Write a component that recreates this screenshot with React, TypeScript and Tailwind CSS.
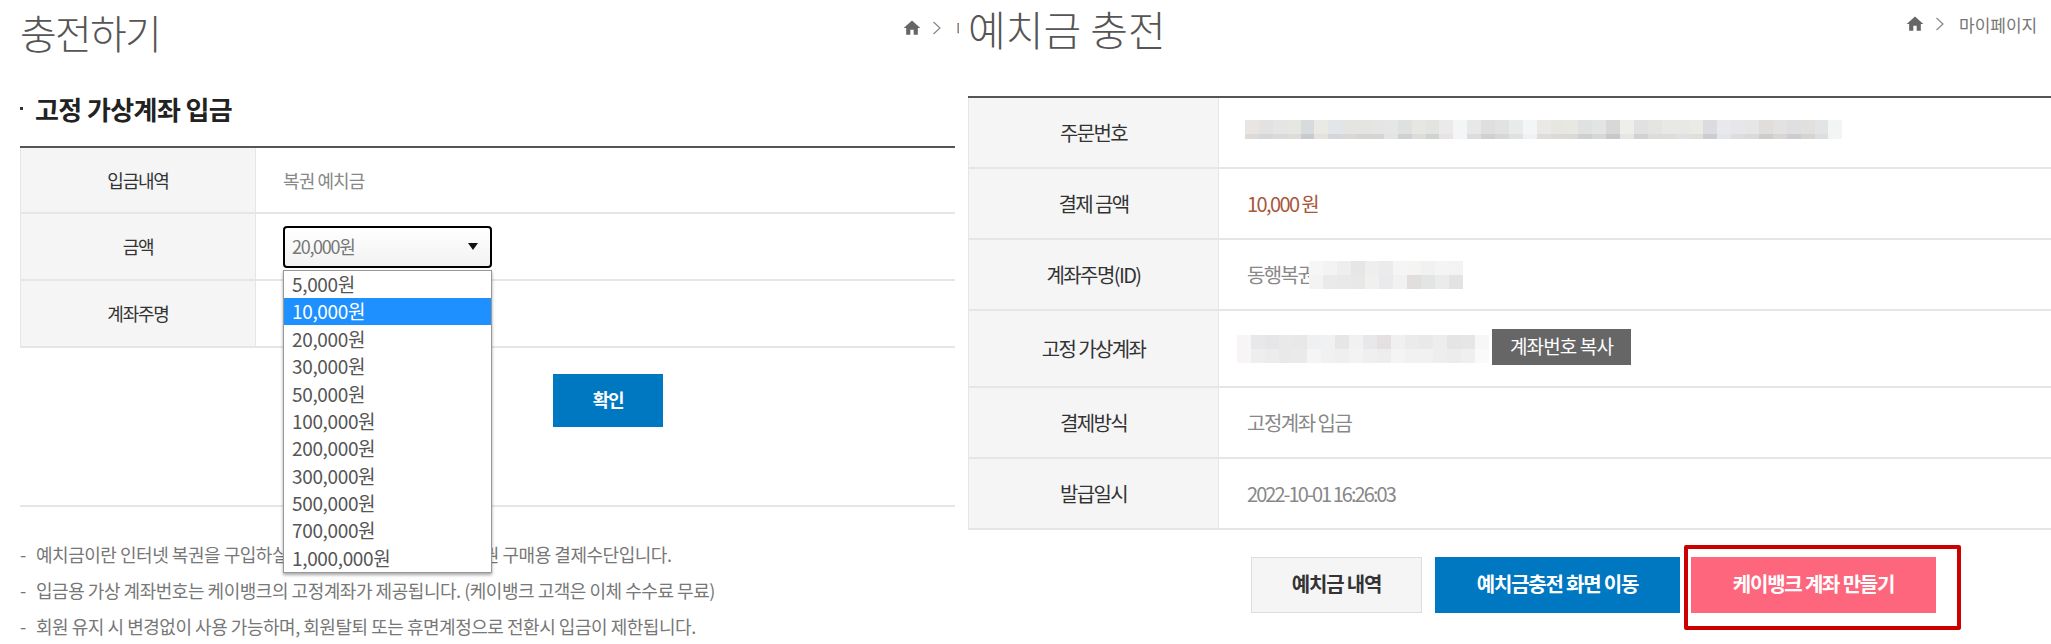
import React from "react";
import { MdHome } from "react-icons/md";

const FONT = "font-['Noto_Sans_CJK_KR','Noto_Sans',sans-serif]";

function Crumb({ clip }: { clip?: boolean }) {
  return (
    <div className={`flex items-center text-[#777] ${clip ? "w-[57px] overflow-hidden" : "w-[132px]"}`}>
      <MdHome className="w-[20px] h-[20px] shrink-0 text-[#666]" />
      <svg className="ml-[10px] shrink-0" width="10" height="14" viewBox="0 0 10 14" fill="none">
        <path d="M1.5 1 L8 7 L1.5 13" stroke="#888" strokeWidth="1.2" />
      </svg>
      <span className="ml-[14px] shrink-0 text-[17px] whitespace-nowrap leading-none">마이페이지</span>
    </div>
  );
}

function Row({ label, h, children, w, t }: { label: string; h: string; children?: React.ReactNode; w: string; t: string }) {
  return (
    <div className={`flex border-b-2 border-[#e6e6e6] ${h}`}>
      <div className={`${w} ${t} shrink-0 bg-[#f5f5f5] border-x border-[#e6e6e6] flex items-center justify-center text-[#333]`}>
        {label}
      </div>
      <div className="flex-1 flex items-center min-w-0">{children}</div>
    </div>
  );
}

const options = ["5,000원", "10,000원", "20,000원", "30,000원", "50,000원", "100,000원", "200,000원", "300,000원", "500,000원", "700,000원", "1,000,000원"];

function Mosaic({ rows, cell, w, x }: { rows: { h: string; c: string[] }[]; cell: string; w: string; x?: string }) {
  return (
    <div className={`flex flex-col shrink-0 blur-[0.6px] ${w} ${x ?? ""}`}>
      {rows.map((r, i) => (
        <div key={i} className={`flex ${r.h}`}>
          {r.c.map((c, j) => (
            <div key={j} className={`${cell} shrink-0 ${c}`} />
          ))}
        </div>
      ))}
    </div>
  );
}

const p1a = ["bg-[#e8e5e2]","bg-[#e2e2e2]","bg-[#e4e6e6]","bg-[#e6e6e2]","bg-[#d8dbde]","bg-[#ebe9e4]","bg-[#e2e6ea]","bg-[#e6e3e3]","bg-[#e4e4e2]","bg-[#e5e6e4]","bg-[#e5e7e7]","bg-[#dfe1e0]","bg-[#e6e7e3]","bg-[#e2e4e2]","bg-[#ebe9e9]","bg-[#f4f5f7]","bg-[#e7e8e8]","bg-[#dfdfdf]","bg-[#e1e2e4]","bg-[#e9eaea]","bg-[#f4f5f6]","bg-[#ebe8e8]","bg-[#e8e6e1]","bg-[#e8e8e3]","bg-[#dfe2e0]","bg-[#e2e4e5]","bg-[#d8d8d8]","bg-[#eeeeeb]","bg-[#e1e1e1]","bg-[#e4e4e3]","bg-[#e8e8e7]","bg-[#e8e8e6]","bg-[#ebebe6]","bg-[#dcdce0]","bg-[#e8e9ec]","bg-[#e8e6e8]","bg-[#e6e6e6]","bg-[#e0dddd]","bg-[#e4e1e1]","bg-[#dfdee0]","bg-[#e2dfdf]","bg-[#e2e4e6]","bg-[#f3f4f4]"];
const p1b = ["bg-[#dedbd7]","bg-[#d7d7d7]","bg-[#d9dbdb]","bg-[#dcdcd8]","bg-[#c8cbce]","bg-[#e4e2dd]","bg-[#d3d7da]","bg-[#dad7d7]","bg-[#d4d4d2]","bg-[#d5d6d4]","bg-[#e3e5e5]","bg-[#cfd1d0]","bg-[#dcddd9]","bg-[#d0d2d0]","bg-[#e6e4e4]","bg-[#f4f5f7]","bg-[#dcdddd]","bg-[#d0d0d0]","bg-[#d6d7d9]","bg-[#e0e1e1]","bg-[#f0f1f2]","bg-[#dfdcdc]","bg-[#dcdad5]","bg-[#dadad5]","bg-[#cdd0ce]","bg-[#d5d7d8]","bg-[#c8c8c8]","bg-[#e6e6e3]","bg-[#d2d2d2]","bg-[#dcdcdb]","bg-[#dddddc]","bg-[#e1e1df]","bg-[#e0e0db]","bg-[#cdcdd1]","bg-[#e4e5e8]","bg-[#dedcde]","bg-[#dadada]","bg-[#cfcccc]","bg-[#d8d5d5]","bg-[#cdccce]","bg-[#d6d3d3]","bg-[#dcdee0]","bg-[#f3f4f4]"];
const p2a = ["bg-[#f6f6f6]","bg-[#f3f3f3]","bg-[#eeeeee]","bg-[#e6e6e6]","bg-[#eeeeef]","bg-[#ebebeb]","bg-[#f5f5f5]","bg-[#f4f4f3]","bg-[#f1f1f1]","bg-[#f6f4f2]","bg-[#f3f3f3]"];
const p2b = ["bg-[#f3f3f3]","bg-[#ebe9e9]","bg-[#e9e9ea]","bg-[#e8e8e8]","bg-[#f0f0ee]","bg-[#eaeaec]","bg-[#f1f1f2]","bg-[#e2dede]","bg-[#e3e4e4]","bg-[#ebebeb]","bg-[#e4e3e3]"];
const p3a = ["bg-[#f7f5f5]","bg-[#e8e8ea]","bg-[#e6e6e8]","bg-[#e9e9e9]","bg-[#e9e8e8]","bg-[#eef0f2]","bg-[#f1f1f1]","bg-[#e6e6e6]","bg-[#f1f1f1]","bg-[#e8e8ea]","bg-[#e4e0e2]","bg-[#f0f0f0]","bg-[#ebebeb]","bg-[#e9e9e9]","bg-[#ededed]","bg-[#e5e5e6]","bg-[#e6e6e6]","bg-[#f7f7f7]"];
const p3b = ["bg-[#f7f5f5]","bg-[#eeeeee]","bg-[#ececec]","bg-[#e9e9e9]","bg-[#eaeaea]","bg-[#f5f5f5]","bg-[#f0f1f2]","bg-[#efefef]","bg-[#f3f3f3]","bg-[#efeff0]","bg-[#ededed]","bg-[#f4f4f4]","bg-[#f1f1f1]","bg-[#f1f1f1]","bg-[#eeeeee]","bg-[#ececec]","bg-[#efefef]","bg-[#fafafa]"];

function Btn({ cls, children }: { cls: string; children: React.ReactNode }) {
  return <div className={`h-[56px] flex items-center justify-center font-bold pb-[3px] ${cls}`}>{children}</div>;
}

const LT = "text-[18px] tracking-[-1.2px]";
const RT = "text-[20px] tracking-[-1.6px]";

export default function App() {
  return (
    <div className={`${FONT} flex w-[2051px] h-[644px] overflow-hidden bg-white`}>
      {/* left */}
      <div className="w-[968px] shrink-0 pl-[20px] pr-[13px]">
        <div className="h-[68px] flex items-start justify-between">
          <h1 className="text-[40px] leading-[48px] mt-[8px] font-light tracking-[-1.8px] text-[#555]">충전하기</h1>
          <div className="mt-[18px] -mr-[4px]"><Crumb clip /></div>
        </div>
        <div className="h-[78px] flex items-center pt-[3px]">
          <span className="w-[3px] h-[3px] bg-[#333] mr-[12px]" />
          <h2 className="text-[26px] font-bold tracking-[-0.6px] text-[#222]">고정 가상계좌 입금</h2>
        </div>
        <div className="border-t-2 border-[#555]">
          <Row label="입금내역" h="h-[66px]" w="w-[236px]" t={LT}>
            <span className="ml-[27px] text-[18px] tracking-[-0.9px] text-[#888]">복권 예치금</span>
          </Row>
          <Row label="금액" h="h-[67px]" w="w-[236px]" t={LT}>
            <div className="relative ml-[27px] w-[209px]">
              <div className="h-[42px] border-2 border-black rounded-[4px] bg-gradient-to-b from-white to-[#f2f2f2] flex items-center justify-between pl-[7px] pr-[11px] text-[#777] text-[18px] tracking-[-1.3px]">
                <span>20,000원</span>
                <svg width="12" height="9" viewBox="0 0 12 9"><path d="M1 1 H11 L6 8 Z" fill="#111" /></svg>
              </div>
              <div className="absolute z-10 left-0 top-[44px] w-[209px] bg-white border border-[#999] shadow-[0_2px_3px_rgba(0,0,0,0.35)]">
                {options.map((o) => (
                  <div key={o} className={`h-[27.4px] flex items-center pl-[8px] text-[19px] tracking-[-0.35px] ${o === "10,000원" ? "bg-[#1e90ff] text-white" : "text-[#555]"}`}>{o}</div>
                ))}
              </div>
            </div>
          </Row>
          <Row label="계좌주명" h="h-[67px]" w="w-[236px]" t={LT} />
        </div>
        <div className="pt-[26px] flex pl-[533px]">
          <Btn cls="w-[110px] !h-[53px] bg-[#0078c1] text-white text-[18px] tracking-[-1.2px]">확인</Btn>
        </div>
        <div className="mt-[78px] border-t-2 border-[#e6e6e6] pt-[35px] text-[18px] tracking-[-0.47px] text-[#777] flex flex-col gap-[11px] leading-[25px]">
          <p className="flex whitespace-nowrap"><span className="w-[16px]">-</span>예치금이란 인터넷 복권을 구입하실 때 사용하실 수 있는 동행복권 구매용 결제수단입니다.</p>
          <p className="flex whitespace-nowrap"><span className="w-[16px]">-</span>입금용 가상 계좌번호는 케이뱅크의 고정계좌가 제공됩니다. (케이뱅크 고객은 이체 수수료 무료)</p>
          <p className="flex whitespace-nowrap"><span className="w-[16px]">-</span>회원 유지 시 변경없이 사용 가능하며, 회원탈퇴 또는 휴면계정으로 전환시 입금이 제한됩니다.</p>
        </div>
      </div>

      {/* right */}
      <div className="flex-1 min-w-0">
        <div className="h-[96px] flex items-start justify-between pr-[14px]">
          <h1 className="text-[41px] leading-[48px] mt-[4px] font-light text-[#555]">예치금 충전</h1>
          <div className="mt-[14px]"><Crumb /></div>
        </div>
        <div className="border-t-2 border-[#555]">
          <Row label="주문번호" h="h-[71px]" w="w-[251px]" t={RT}>
            <Mosaic w="w-[597px]" cell="w-[13.9px]" x="ml-[26px] -mt-[7px]" rows={[{ h: "h-[14px]", c: p1a }, { h: "h-[5px]", c: p1b }]} />
          </Row>
          <Row label="결제 금액" h="h-[71px]" w="w-[251px]" t={RT}>
            <span className="ml-[28px] text-[20px] tracking-[-1.6px] text-[#a8573c]">10,000 원</span>
          </Row>
          <Row label="계좌주명(ID)" h="h-[71px]" w="w-[251px]" t={RT}>
            <span className="ml-[28px] w-[62px] overflow-hidden whitespace-nowrap text-[20px] tracking-[-1.6px] text-[#888]">동행복권</span>
            <Mosaic w="w-[154px]" cell="w-[14px]" rows={[{ h: "h-[14px]", c: p2a }, { h: "h-[14px]", c: p2b }]} />
          </Row>
          <Row label="고정 가상계좌" h="h-[77px]" w="w-[251px]" t={RT}>
            <Mosaic w="w-[252px]" cell="w-[14px]" x="ml-[18px]" rows={[{ h: "h-[14px]", c: p3a }, { h: "h-[14px]", c: p3b }]} />
            <div className="ml-[3px] w-[139px] h-[36px] bg-[#666] text-white flex items-center justify-center text-[19px] tracking-[-0.85px] -mt-[4px]">계좌번호 복사</div>
          </Row>
          <Row label="결제방식" h="h-[71px]" w="w-[251px]" t={RT}>
            <span className="ml-[28px] text-[20px] tracking-[-1.5px] text-[#888]">고정계좌 입금</span>
          </Row>
          <Row label="발급일시" h="h-[71px]" w="w-[251px]" t={RT}>
            <span className="ml-[28px] text-[20px] tracking-[-1.95px] text-[#888]">2022-10-01 16:26:03</span>
          </Row>
        </div>
        <div className="mt-[27px] pl-[283px] flex text-[20px] tracking-[-1.2px]">
          <Btn cls="w-[171px] bg-[#f5f5f5] border border-[#ddd] text-[#333]">예치금 내역</Btn>
          <Btn cls="ml-[13px] w-[245px] bg-[#0078c1] text-white">예치금충전 화면 이동</Btn>
          <div className="relative ml-[11px]">
            <Btn cls="w-[245px] bg-[#fe667e] text-white">케이뱅크 계좌 만들기</Btn>
            <div className="absolute left-[-7px] top-[-12px] w-[277px] h-[85px] border-[4px] border-[#c00] rounded-[2px]" />
          </div>
        </div>
      </div>
    </div>
  );
}
